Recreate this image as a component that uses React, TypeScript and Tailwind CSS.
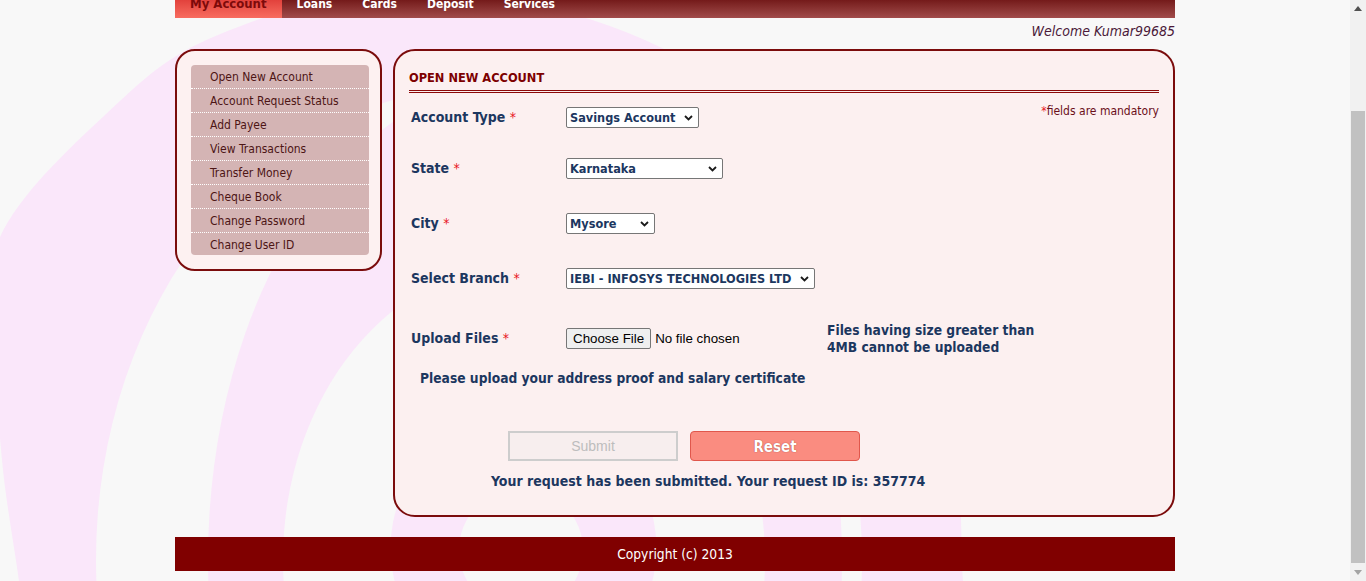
import React from 'react';

type Pt = [number, number];

// smooth closed outline through a list of points (catmull-rom -> bezier)
const smoothPath = (pts: Pt[]) => {
  let d = `M ${pts[0][0]} ${pts[0][1]}`;
  for (let i = 0; i < pts.length - 1; i++) {
    const p0 = pts[i - 1] || pts[i];
    const p1 = pts[i];
    const p2 = pts[i + 1];
    const p3 = pts[i + 2] || p2;
    const c1x = p1[0] + (p2[0] - p0[0]) / 6;
    const c1y = p1[1] + (p2[1] - p0[1]) / 6;
    const c2x = p2[0] - (p3[0] - p1[0]) / 6;
    const c2y = p2[1] - (p3[1] - p1[1]) / 6;
    d += ` C ${c1x} ${c1y}, ${c2x} ${c2y}, ${p2[0]} ${p2[1]}`;
  }
  return d + ' Z';
};

const ellipse = (cx: number, cy: number, rx: number, ry: number) =>
  `M ${cx - rx} ${cy} a ${rx} ${ry} 0 1 0 ${rx * 2} 0 a ${rx} ${ry} 0 1 0 ${-rx * 2} 0 Z`;

const outerA: Pt[] = [
  [19, 600], [19, 581], [3, 470], [-4, 360], [0, 237], [105, 115], [218, 35],
  [420, -12], [662, 48], [850, 200], [945, 380], [963, 581], [963, 600],
];

const Rings = () => (
  <svg className="absolute left-0 top-0" width="1350" height="581" viewBox="0 0 1350 581">
    <g fill="#fae7fa" fillRule="evenodd">
      <path d={smoothPath(outerA) + ' ' + ellipse(479, 560, 383, 472)} />
      <path d={ellipse(525, 560, 317, 482) + ' ' + ellipse(524, 560, 241, 297)} />
      <path d={ellipse(523.5, 548, 133, 133) + ' ' + ellipse(521, 550, 62, 62)} />
    </g>
  </svg>
);

const menuItems = [
  'Open New Account',
  'Account Request Status',
  'Add Payee',
  'View Transactions',
  'Transfer Money',
  'Cheque Book',
  'Change Password',
  'Change User ID',
];

const navItems = ['Loans', 'Cards', 'Deposit', 'Services'];

const Chevron = () => (
  <svg width="9" height="6" viewBox="0 0 9 6" className="shrink-0">
    <path d="M1 1 L4.5 4.5 L8 1" fill="none" stroke="#1a1a1a" strokeWidth="1.8" />
  </svg>
);

const FakeSelect = ({ value, width }: { value: string; width: string }) => (
  <div className={`flex h-[21px] items-center justify-between rounded-[2px] border border-[#767676] bg-white pl-[3px] pr-[5px] ${width}`}>
    <span className="whitespace-nowrap pt-[2px] text-[12.6px] font-bold leading-none text-[#1c375f]">{value}</span>
    <Chevron />
  </div>
);

const Label = ({ text }: { text: string }) => (
  <div className="w-[157px] shrink-0 pl-[2px] text-[14px] font-bold leading-[21px] text-[#1c375f]">
    {text} <span className="font-normal text-[#e8141c]">*</span>
  </div>
);

export default function App() {
  return (
    <div className="flex h-[581px] w-full overflow-hidden bg-[#f8f8f8] font-['DejaVu_Sans_Condensed','DejaVu_Sans',sans-serif]">
      <div className="relative w-[1350px] shrink-0 overflow-hidden">
        <Rings />
        <div className="relative mx-auto w-[1000px]">
          {/* top navigation (page is scrolled, only its lower part shows) */}
          <div className="flex h-[18px] overflow-hidden bg-gradient-to-b from-[#741a1a] to-[#a14b4b]">
            <div className="bg-gradient-to-b from-[#e2413c] to-[#f86c60] px-[15px]">
              <span className="-mt-[5px] block text-[13px] font-bold leading-[18px] text-[#7d0a0a]">My Account</span>
            </div>
            {navItems.map((item) => (
              <div key={item} className="px-[15px]">
                <span className="-mt-[5px] block text-[12px] font-bold leading-[18px] text-white">{item}</span>
              </div>
            ))}
          </div>

          <div className="h-[31px] text-right text-[14px] italic leading-[26px] text-[#4a1838]">Welcome Kumar99685</div>

          <div className="flex items-start">
            {/* side menu */}
            <div className="w-[207px] rounded-[20px] border-2 border-[#7b0c0c] bg-[#fdf1f1] py-[14px] pl-[14px] pr-[11px]">
              <div className="overflow-hidden rounded-[4px] bg-[#d4b4b4]">
                {menuItems.map((item, i) => (
                  <div
                    key={item}
                    className={`pl-[19px] text-[12px] text-[#4d1515] ${
                      i < menuItems.length - 1 ? 'h-[24px] border-b border-dotted border-white leading-[24px]' : 'h-[22px] leading-[24px]'
                    }`}
                  >
                    {item}
                  </div>
                ))}
              </div>
            </div>

            {/* main form panel */}
            <div className="ml-[11px] h-[468px] w-[782px] rounded-[22px] border-2 border-[#7b0c0c] bg-[#fcf0f0] px-[14px]">
              <div className="border-b-[3px] border-double border-[#8b0a0a] pb-[4px] pt-[18px] text-[12.7px] font-bold leading-[17px] text-[#7d0000]">
                OPEN NEW ACCOUNT
              </div>

              <div className="mt-[14px] flex h-[21px] items-center">
                <Label text="Account Type" />
                <FakeSelect value="Savings Account" width="w-[133px]" />
                <span className="-mt-[3px] ml-auto self-start text-[12px] leading-[14px] text-[#6b0f1a]">
                  <span className="text-[#e8141c]">*</span>fields are mandatory
                </span>
              </div>

              <div className="mt-[30px] flex h-[21px] items-center">
                <Label text="State" />
                <FakeSelect value="Karnataka" width="w-[157px]" />
              </div>

              <div className="mt-[34px] flex h-[21px] items-center">
                <Label text="City" />
                <FakeSelect value="Mysore" width="w-[89px]" />
              </div>

              <div className="mt-[34px] flex h-[21px] items-center">
                <Label text="Select Branch" />
                <FakeSelect value="IEBI - INFOSYS TECHNOLOGIES LTD" width="w-[249px]" />
              </div>

              <div className="mt-[33px] flex items-start">
                <div className="mt-[6px] flex h-[21px] items-center">
                  <Label text="Upload Files" />
                  <div className="flex w-[261px] items-center font-['Liberation_Sans',Arial,sans-serif] text-[13.33px] text-black">
                    <span className="flex h-[21px] items-center rounded-[2px] border border-[#767676] bg-[#efefef] px-[6px]">Choose File</span>
                    <span className="ml-[4px]">No file chosen</span>
                  </div>
                </div>
                <div className="text-[13.7px] font-bold leading-[17px] text-[#1c375f]">
                  Files having size greater than
                  <br />
                  4MB cannot be uploaded
                </div>
              </div>

              <div className="mt-[12px] pl-[11px] text-[13.7px] font-bold leading-[20px] text-[#1c375f]">
                Please upload your address proof and salary certificate
              </div>

              <div className="ml-[99px] mt-[43px] flex gap-[12px]">
                <button
                  type="button"
                  disabled
                  className="h-[30px] w-[170px] border-2 border-[#cdcdcd] bg-[#f7eeee] font-['Liberation_Sans',Arial,sans-serif] text-[14px] text-[#bdbdbd]"
                >
                  Submit
                </button>
                <button
                  type="button"
                  className="h-[30px] w-[170px] rounded-[4px] border border-[#e0574c] bg-[#fa8c80] pt-[2px] text-[15px] font-bold text-white [text-shadow:0_0_1px_#8a2a20]"
                >
                  Reset
                </button>
              </div>

              <div className="ml-[82px] mt-[10px] text-[14px] font-bold leading-[20px] text-[#1c375f]">
                Your request has been submitted. Your request ID is: 357774
              </div>
            </div>
          </div>

          <div className="mt-[20px] flex h-[34px] items-center justify-center bg-[#800000] pt-[1px] text-[13.7px] text-white">
            Copyright (c) 2013
          </div>
        </div>
      </div>

      {/* scrollbar */}
      <div className="flex w-[16px] flex-col bg-[#f1f1f1]">
        <div className="flex h-[17px] items-center justify-center">
          <svg width="8" height="5" viewBox="0 0 8 5"><path d="M0 5 L4 0 L8 5 Z" fill="#505050" /></svg>
        </div>
        <div className="mx-[1px] mt-[94px] h-[452px] bg-[#c1c1c1]" />
        <div className="flex flex-1 items-center justify-center">
          <svg width="8" height="5" viewBox="0 0 8 5"><path d="M0 0 L8 0 L4 5 Z" fill="#a3a3a3" /></svg>
        </div>
      </div>
    </div>
  );
}
